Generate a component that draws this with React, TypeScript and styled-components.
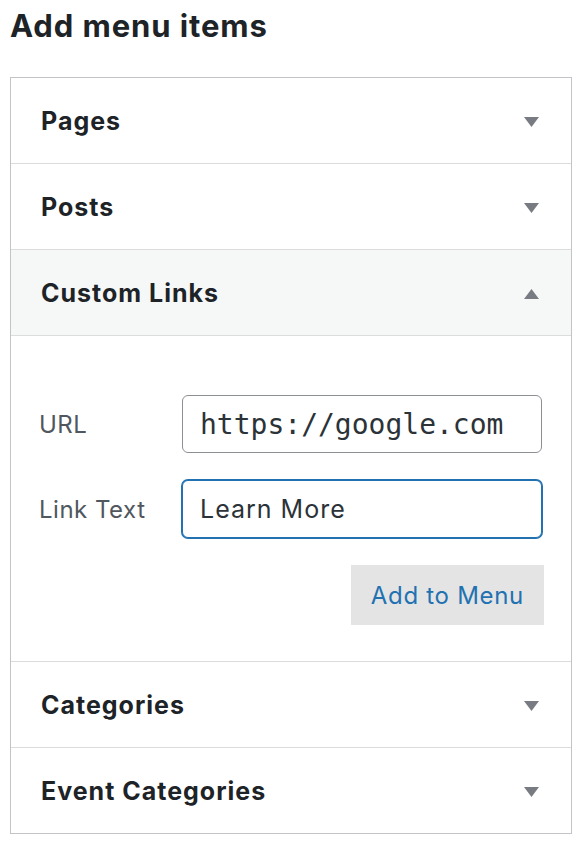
import React, { useState } from 'react';
import styled, { createGlobalStyle } from 'styled-components';

const GlobalStyle = createGlobalStyle`
  body {
    margin: 0;
    background: #fff;
    font-family: Inter, "Noto Sans", "Liberation Sans", sans-serif;
    color: #1d2327;
  }
`;

type Section = {
  title: string;
  open?: boolean;
};

const sections: Section[] = [
  { title: 'Pages' },
  { title: 'Posts' },
  { title: 'Custom Links', open: true },
  { title: 'Categories' },
  { title: 'Event Categories' },
];

function Arrow({ up }: { up?: boolean }) {
  return (
    <ArrowIcon width="15" height="10" viewBox="0 0 15 10" aria-hidden>
      {up ? <polygon points="0,10 15,10 7.5,0" /> : <polygon points="0,0 15,0 7.5,10" />}
    </ArrowIcon>
  );
}

function CustomLinksForm() {
  const [url, setUrl] = useState('https://google.com');
  const [text, setText] = useState('Learn More');

  return (
    <Body>
      <Field>
        <Label>URL</Label>
        <UrlInput value={url} onChange={(e) => setUrl(e.target.value)} />
      </Field>
      <Field>
        <Label>Link Text</Label>
        <TextInput $focused value={text} onChange={(e) => setText(e.target.value)} />
      </Field>
      <Actions>
        <AddButton type="button">Add to Menu</AddButton>
      </Actions>
    </Body>
  );
}

export default function App() {
  return (
    <Page>
      <GlobalStyle />
      <Title>Add menu items</Title>
      <Box>
        {sections.map((s) => (
          <Item key={s.title}>
            <Header $open={s.open}>
              <HeaderTitle>{s.title}</HeaderTitle>
              <Arrow up={s.open} />
            </Header>
            {s.open && <CustomLinksForm />}
          </Item>
        ))}
      </Box>
    </Page>
  );
}

const Page = styled.div`
  padding: 6px 12px 0 10px;
`;

const Title = styled.h2`
  margin: 0 0 31px;
  font-size: 31px;
  line-height: 40px;
  font-weight: 700;
  color: #1d2327;
  letter-spacing: 0.9px;
`;

const Box = styled.div`
  width: 560px;
  border: 1px solid #c3c4c7;
  box-shadow: 0 1px 1px rgba(0, 0, 0, 0.04);
`;

const Item = styled.div`
  border-bottom: 1px solid #dcdcde;

  &:last-child {
    border-bottom: none;
  }
`;

const Header = styled.div<{ $open?: boolean }>`
  height: 85px;
  display: flex;
  align-items: center;
  justify-content: space-between;
  padding: 0 32px 0 30px;
  background: ${(p) => (p.$open ? '#f6f7f7' : '#fff')};
  border-bottom: ${(p) => (p.$open ? '1px solid #dcdcde' : 'none')};
`;

const HeaderTitle = styled.h3`
  margin: 0;
  font-size: 25px;
  font-weight: 700;
  letter-spacing: 1px;
  color: #1d2327;
`;

const ArrowIcon = styled.svg`
  fill: #787c82;
  display: block;
  margin-top: 2px;
`;

const Body = styled.div`
  padding: 59px 29px 36px 28px;
  display: flex;
  flex-direction: column;
  gap: 27px;
`;

const Field = styled.div`
  display: flex;
  align-items: center;
`;

const Label = styled.label`
  width: 143px;
  font-size: 24px;
  letter-spacing: 0.5px;
  color: #50575e;
`;

const UrlInput = styled.input<{ $focused?: boolean }>`
  box-sizing: border-box;
  width: 360px;
  height: 58px;
  padding: 0 17px;
  border: 1px solid ${(p) => (p.$focused ? '#2271b1' : '#8c8f94')};
  box-shadow: ${(p) => (p.$focused ? '0 0 0 1px #2271b1' : 'none')};
  border-radius: 6px;
  font-family: "DejaVu Sans Mono", "Liberation Mono", monospace;
  font-size: 28px;
  color: #2c3338;
  background: #fff;
  outline: none;
`;

const TextInput = styled(UrlInput)`
  font-family: Inter, "Noto Sans", sans-serif;
  font-size: 25px;
  letter-spacing: 1px;
`;

const Actions = styled.div`
  display: flex;
  justify-content: flex-end;
  margin-right: -2px;
`;

const AddButton = styled.button`
  height: 60px;
  padding: 0 20px;
  border: none;
  border-radius: 0;
  background: #e4e4e4;
  color: #2271b1;
  font-family: Inter, "Noto Sans", sans-serif;
  font-size: 24px;
  letter-spacing: 0.7px;
  cursor: pointer;
`;
